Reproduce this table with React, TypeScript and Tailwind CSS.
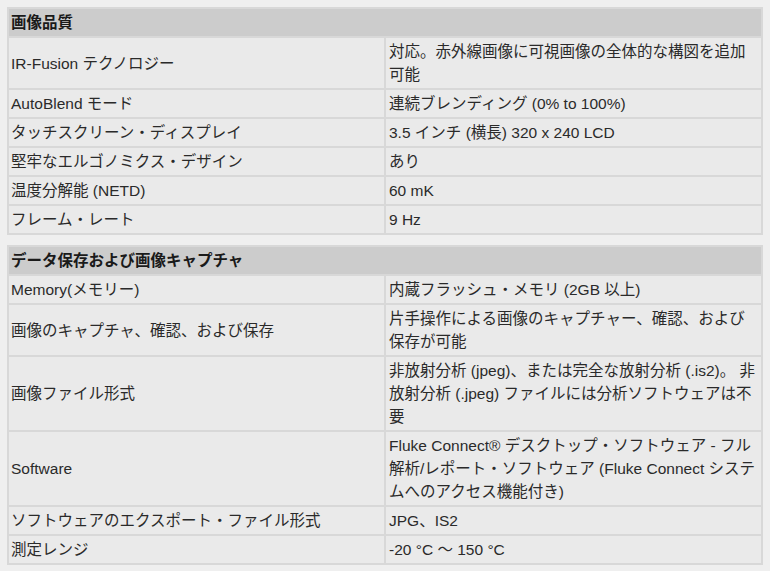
const SECTIONS: { title: string; rows: [string, string[]][] }[] = [
  {
    title: "画像品質",
    rows: [
      ["IR-Fusion テクノロジー", ["対応。赤外線画像に可視画像の全体的な構図を追加", "可能"]],
      ["AutoBlend モード", ["連続ブレンディング (0% to 100%)"]],
      ["タッチスクリーン・ディスプレイ", ["3.5 インチ (横長) 320 x 240 LCD"]],
      ["堅牢なエルゴノミクス・デザイン", ["あり"]],
      ["温度分解能 (NETD)", ["60 mK"]],
      ["フレーム・レート", ["9 Hz"]],
    ],
  },
  {
    title: "データ保存および画像キャプチャ",
    rows: [
      ["Memory(メモリー)", ["内蔵フラッシュ・メモリ (2GB 以上)"]],
      ["画像のキャプチャ、確認、および保存", ["片手操作による画像のキャプチャー、確認、および", "保存が可能"]],
      [
        "画像ファイル形式",
        ["非放射分析 (jpeg)、または完全な放射分析 (.is2)。 非", "放射分析 (.jpeg) ファイルには分析ソフトウェアは不", "要"],
      ],
      [
        "Software",
        [
          "Fluke Connect® デスクトップ・ソフトウェア - フル",
          "解析/レポート・ソフトウェア (Fluke Connect システ",
          "ムへのアクセス機能付き)",
        ],
      ],
      ["ソフトウェアのエクスポート・ファイル形式", ["JPG、IS2"]],
      ["測定レンジ", ["-20 °C ～ 150 °C"]],
    ],
  },
];

function SpecTable({ title, rows }: { title: string; rows: [string, string[]][] }) {
  return (
    <table className="w-full table-fixed border-separate border-spacing-[2px] bg-[#d8d8d8]">
      <thead>
        <tr>
          <th colSpan={2} className="bg-[#cccccc] px-[2px] py-[2px] text-left font-bold text-[#1a1a1a]">
            {title}
          </th>
        </tr>
      </thead>
      <tbody>
        {rows.map(([label, value]) => (
          <tr key={label}>
            <td className="w-[374px] bg-[#eaeaea] px-[2px] py-[2px] align-middle text-[#2a2a2a]">{label}</td>
            <td className="bg-[#eaeaea] px-[3px] py-[2px] align-middle text-[#2a2a2a]">
              {value.map((line, i) => (
                <div key={i} className="whitespace-nowrap">
                  {line}
                </div>
              ))}
            </td>
          </tr>
        ))}
      </tbody>
    </table>
  );
}

export default function App() {
  return (
    <div
      className="min-h-screen w-[770px] bg-[#efefef] px-[7px] pt-[7px] text-[15.5px] leading-[23px]"
      style={{ fontFamily: '"Liberation Sans", Arial, "Noto Sans CJK JP", sans-serif' }}
    >
      <div className="flex flex-col gap-[10px]">
        {SECTIONS.map((s) => (
          <SpecTable key={s.title} title={s.title} rows={s.rows} />
        ))}
      </div>
    </div>
  );
}
